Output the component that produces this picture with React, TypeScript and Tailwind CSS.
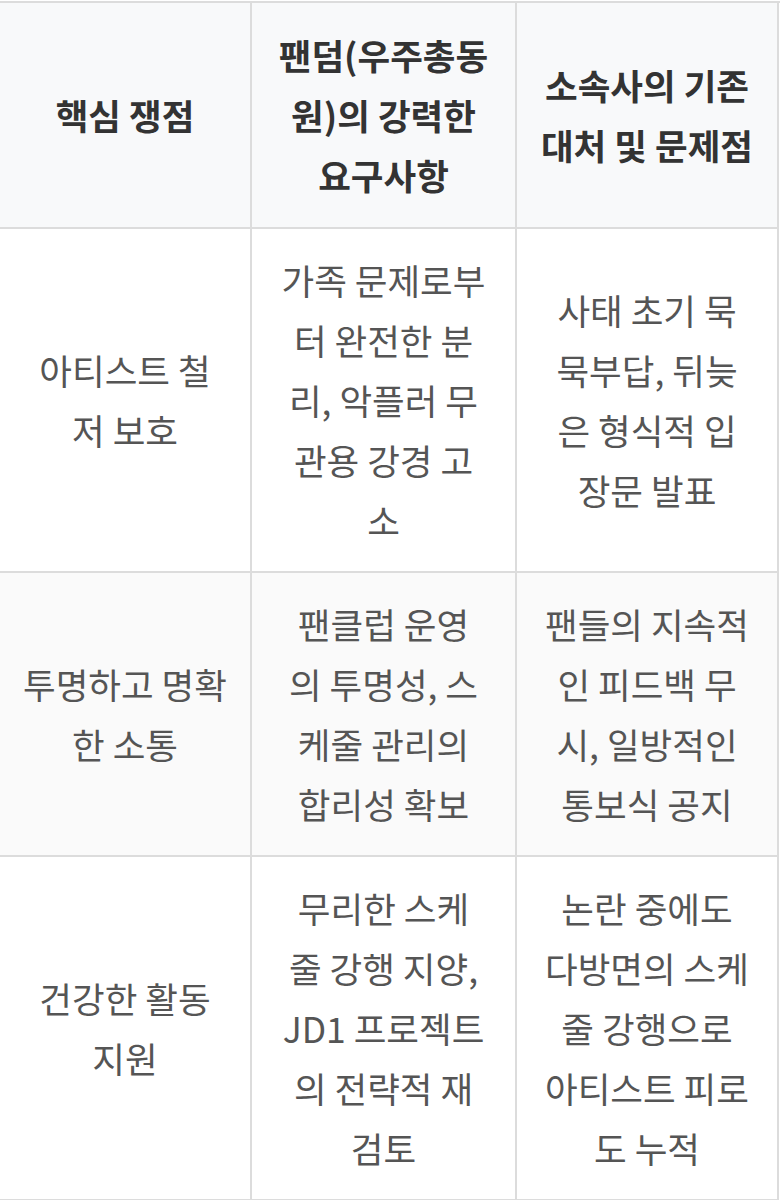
import React from "react";

const header = [
  ["핵심 쟁점"],
  ["팬덤(우주총동", "원)의 강력한", "요구사항"],
  ["소속사의 기존", "대처 및 문제점"],
];

const rows: { bg: string; cells: string[][] }[] = [
  {
    bg: "bg-white",
    cells: [
      ["아티스트 철", "저 보호"],
      ["가족 문제로부", "터 완전한 분", "리, 악플러 무", "관용 강경 고", "소"],
      ["사태 초기 묵", "묵부답, 뒤늦", "은 형식적 입", "장문 발표"],
    ],
  },
  {
    bg: "bg-[#fafafa]",
    cells: [
      ["투명하고 명확", "한 소통"],
      ["팬클럽 운영", "의 투명성, 스", "케줄 관리의", "합리성 확보"],
      ["팬들의 지속적", "인 피드백 무", "시, 일방적인", "통보식 공지"],
    ],
  },
  {
    bg: "bg-white",
    cells: [
      ["건강한 활동", "지원"],
      ["무리한 스케", "줄 강행 지양,", "JD1 프로젝트", "의 전략적 재", "검토"],
      ["논란 중에도", "다방면의 스케", "줄 강행으로", "아티스트 피로", "도 누적"],
    ],
  },
];

function Lines({ lines }: { lines: string[] }) {
  return (
    <div className="whitespace-nowrap text-center">
      {lines.map((l, i) => (
        <div key={i}>{l}</div>
      ))}
    </div>
  );
}

export default function App() {
  return (
    <div
      className="w-[780px] h-[1200px] overflow-hidden bg-white pt-px"
      style={{ fontFamily: '"Noto Sans CJK KR", "Noto Sans", sans-serif' }}
    >
      <div className="grid grid-cols-[252px_265px_262px] border-t-2 border-[#dcdcdc] text-[35.5px] leading-[60px]">
        {header.map((lines, i) => (
          <div
            key={`h${i}`}
            className="flex items-center justify-center border-b-2 border-r-2 border-[#dcdcdc] bg-[#f8f9fa] py-[22px] font-bold text-[#333333]"
          >
            <Lines lines={lines} />
          </div>
        ))}
        {rows.map((row, r) =>
          row.cells.map((lines, c) => (
            <div
              key={`r${r}c${c}`}
              className={`flex items-center justify-center border-b-2 border-r-2 border-[#dcdcdc] py-[21px] text-[#555555] ${row.bg}`}
            >
              <Lines lines={lines} />
            </div>
          ))
        )}
      </div>
    </div>
  );
}
